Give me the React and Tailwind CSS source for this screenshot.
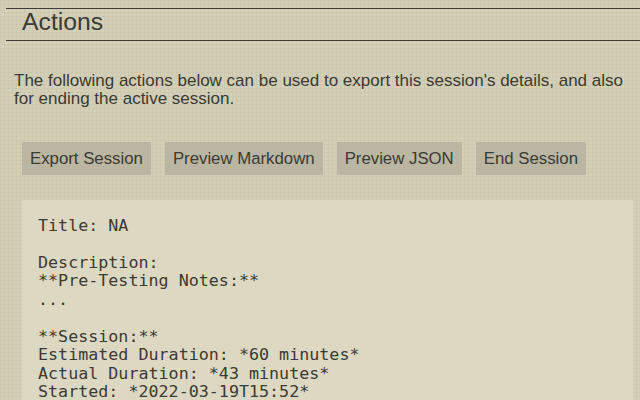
import React from 'react';

const BUTTONS = ['Export Session', 'Preview Markdown', 'Preview JSON', 'End Session'];

const PREVIEW = `Title: NA

Description:
**Pre-Testing Notes:**
...

**Session:**
Estimated Duration: *60 minutes*
Actual Duration: *43 minutes*
Started: *2022-03-19T15:52*`;

const App = () => {
    return (
        <div className="w-[640px] h-[400px] overflow-hidden bg-[#d4d0b8] bg-[linear-gradient(to_right,#cdc9b1_1px,transparent_1px),linear-gradient(to_bottom,#cdc9b1_1px,transparent_1px)] bg-[size:4px_4px] text-[#3b3a33] font-['Liberation_Sans',Arial,sans-serif]">
            {/* heading */}
            <div className="ml-[6px] mt-2 h-[33px] border-y border-[#3d3c35] pl-4">
                <h2 className="pt-[1px] text-[24.75px] leading-[24px]">Actions</h2>
            </div>

            <p className="mt-[31px] px-[14px] text-[17px] leading-[18px]">
                The following actions below can be used to export this session's details, and also for ending the active session.
            </p>

            {/* buttons */}
            <div className="mt-[34px] ml-[22px] flex gap-[14px]">
                {BUTTONS.map((b) => (
                    <button
                        key={b}
                        type="button"
                        className="h-[33px] px-2 bg-[#bab6a2] text-[16.8px] text-[#3b3a33]"
                    >
                        {b}
                    </button>
                ))}
            </div>

            {/* preview */}
            <div className="mt-[25px] ml-[22px] w-[611px] bg-[#dcd8c1] px-4 pt-4 pb-4">
                <pre className="font-['DejaVu_Sans_Mono',monospace] text-[16.7px] leading-[18.44px] text-[#3b3a33]">{PREVIEW}</pre>
            </div>
        </div>
    );
};

export default App;
